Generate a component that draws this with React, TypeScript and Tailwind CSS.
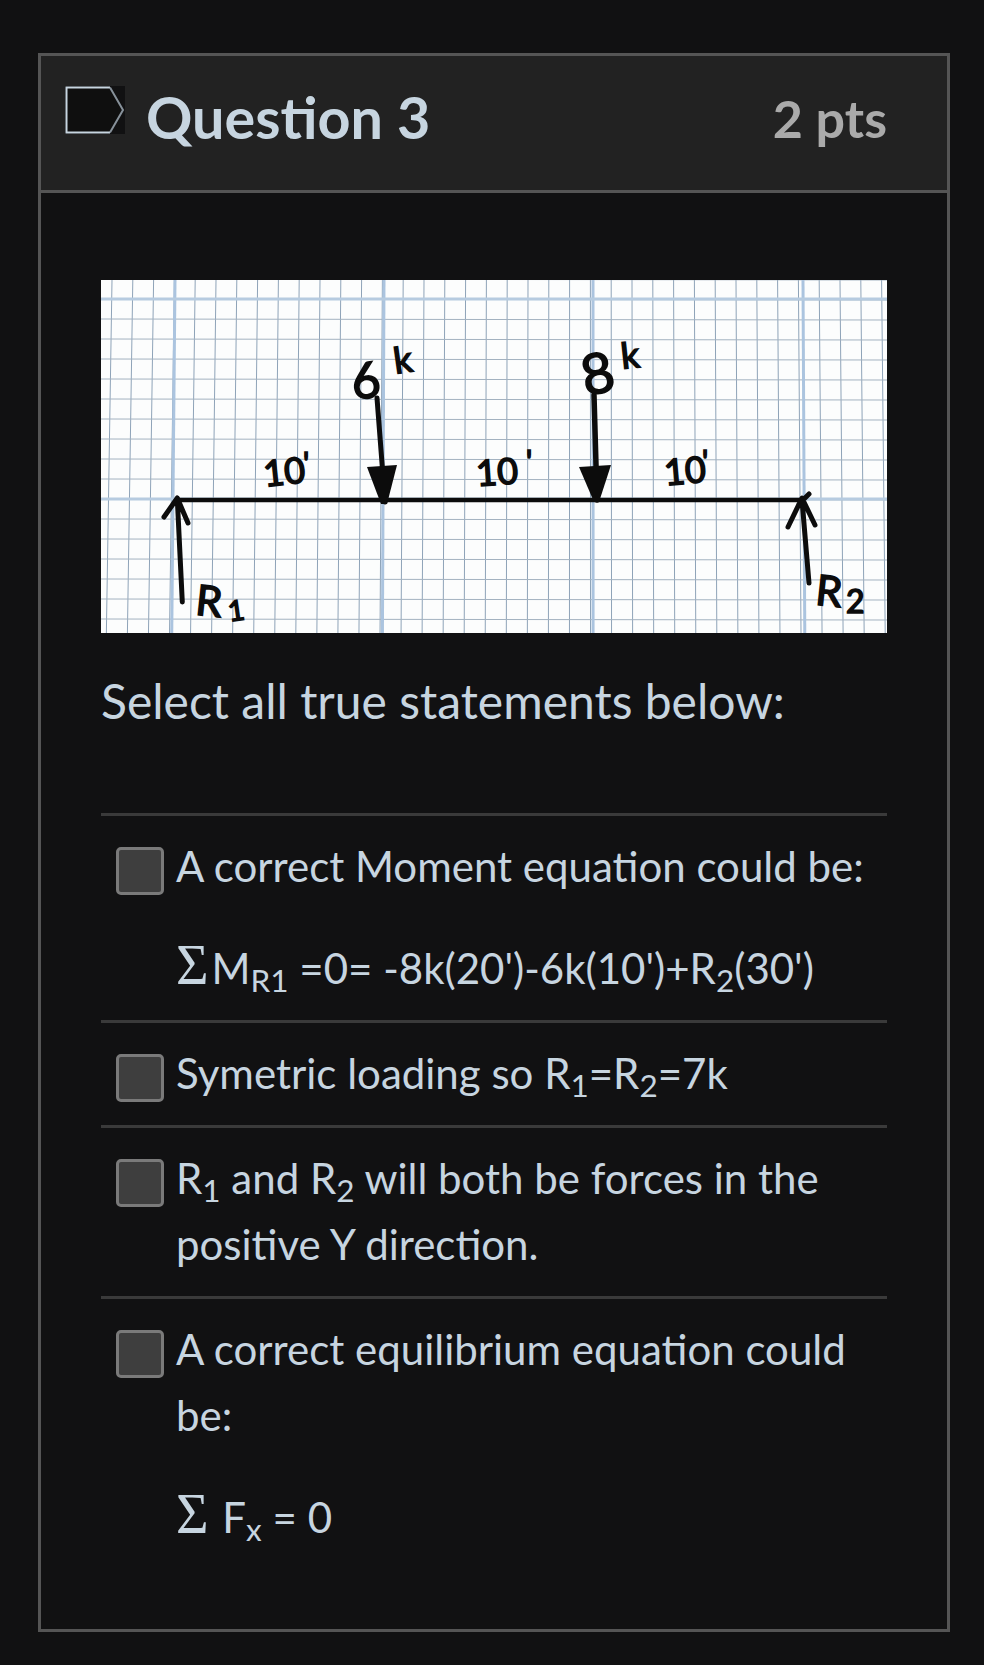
const minorV = Array.from({ length: 38 }, (_, i) => 11 + i * 20.8);
const majorV = [74, 283, 492, 702];
const minorH = Array.from({ length: 18 }, (_, i) => -1 + i * 20);
const majorH = [19, 219];

const hand = { fontFamily: "Lato, sans-serif", fill: "#0c0c0c", stroke: "#0c0c0c", strokeWidth: 1.6, fontWeight: 400 };

function BeamSketch() {
  return (
    <svg viewBox="0 0 786 353" className="block w-full h-[353px] bg-[#fcfdfd]">
      {minorV.map((x) => (
        <line key={x} x1={x} y1={0} x2={x + (x - 480) * 0.012} y2={353} stroke="#8ea3b8" strokeWidth={1} />
      ))}
      {minorH.map((y) => (
        <line key={y} x1={0} y1={y} x2={786} y2={y + 1} stroke="#a3b2c0" strokeWidth={1} />
      ))}
      {majorV.map((x) => (
        <line key={x} x1={x} y1={0} x2={x + (x - 480) * 0.008} y2={353} stroke="#abc4df" strokeWidth={3} />
      ))}
      {majorH.map((y) => (
        <line key={y} x1={0} y1={y} x2={786} y2={y} stroke="#b6cbe0" strokeWidth={3} />
      ))}
      <g fill="none" stroke="#0c0c0c" strokeLinecap="round" strokeLinejoin="round">
        <path d="M76 220 L699 220" strokeWidth={4.5} />
        <path d="M81.3 322 L76.3 219 M63 237 L76.3 218 L87 243" strokeWidth={5} />
        <path d="M276 118 L284 222" strokeWidth={5} />
        <path d="M493 115 L496 220" strokeWidth={5.5} />
        <path d="M708 303 L701 220 M687 247 L701 218 L714 245 M698 224 L708 214" strokeWidth={5} />
      </g>
      <path d="M266 187 L296 185 L286 224 L280 224 Z" fill="#0c0c0c" />
      <path d="M478 187 L510 185 L498 222 L493 222 Z" fill="#0c0c0c" />
      <g style={hand}>
        <text x={250} y={118} fontSize={50} transform="rotate(-6 265 97)">6</text>
        <text x={293} y={92} fontSize={36} transform="rotate(-8 307 82)">k</text>
        <text x={162} y={205} fontSize={36} transform="rotate(-6 180 190)">10</text>
        <text x={202} y={194} fontSize={30}>'</text>
        <text x={375} y={205} fontSize={36} transform="rotate(-4 392 190)">10</text>
        <text x={425} y={192} fontSize={30}>'</text>
        <text x={563} y={204} fontSize={36} transform="rotate(-5 580 190)">10</text>
        <text x={601} y={192} fontSize={30}>'</text>
        <text x={480} y={113} fontSize={56} transform="rotate(-12 498 92)">8</text>
        <text x={520} y={88} fontSize={36} transform="rotate(-6 530 76)">k</text>
        <text x={95} y={336} fontSize={42} transform="rotate(6 108 320)">R</text>
        <text x={127} y={341} fontSize={28} transform="rotate(-8 132 330)">1</text>
        <text x={715} y={326} fontSize={42} transform="rotate(6 728 310)">R</text>
        <text x={745} y={333} fontSize={32}>2</text>
      </g>
    </svg>
  );
}

function AnswerRow({ children }: { children: React.ReactNode }) {
  return (
    <div className="flex border-t-[3px] border-[#3a3a3a] pt-[17px] pb-[19px] pl-[15px]">
      <div className="mt-[14px] h-[48px] w-[48px] shrink-0 rounded-[5px] border-[3px] border-[#7a7a7a] bg-[#3e3e3e]" />
      <div className="ml-[12px] min-w-0">{children}</div>
    </div>
  );
}

function Sigma() {
  return <span className="mr-[3px] font-['Liberation_Serif',serif] text-[56px] leading-none">Σ</span>;
}

export default function App() {
  return (
    <div className="min-h-[1665px] bg-[#111112] pl-[38px] pr-[34px] pt-[53px] font-['Lato',sans-serif] text-[42px] leading-[66px] text-[#c7d5e0]">
      <div className="border-[3px] border-[#555555]">
        <div className="flex h-[137px] items-start justify-between border-b-[3px] border-[#555555] bg-[#222222] pl-[24px] pr-[60px]">
          <div className="flex items-start">
            <svg width="60" height="48" viewBox="0 0 60 48" className="mt-[30px] block bg-[#111112]">
              <path d="M45 1.5 H1.5 V46.5 H45 L58 24 Z" fill="#0f0f0f" />
              <path d="M45 1.5 H1.5 V46.5 H45" fill="none" stroke="#c7d5e0" strokeWidth="2" />
              <path d="M45 1.5 L58 24 L45 46.5" fill="none" stroke="#87919a" strokeWidth="2" />
            </svg>
            <h2 className="ml-[21px] mt-[27px] text-[57.5px] font-bold leading-[68px] text-[#c7d5e0]">Question 3</h2>
          </div>
          <span className="mt-[32px] text-[52px] font-bold leading-[60px] text-[#aaaaaa]">2 pts</span>
        </div>
        <div className="px-[60px] pt-[87px] pb-[60px]">
          <BeamSketch />
          <p className="mt-[32px] mb-[76px] text-[48px] leading-[72px]">Select all true statements below:</p>
          <AnswerRow>
            <p>A correct Moment equation could be:</p>
            <p className="mt-[36px]">
              <Sigma />M<sub>R1</sub> =0= -8k(20')-6k(10')+R<sub>2</sub>(30')
            </p>
          </AnswerRow>
          <AnswerRow>
            <p>
              Symetric loading so R<sub>1</sub>=R<sub>2</sub>=7k
            </p>
          </AnswerRow>
          <AnswerRow>
            <p>
              R<sub>1</sub> and R<sub>2</sub> will both be forces in the positive Y direction.
            </p>
          </AnswerRow>
          <AnswerRow>
            <p>A correct equilibrium equation could be:</p>
            <p className="mt-[36px]">
              <Sigma /> F<sub>x</sub> = 0
            </p>
          </AnswerRow>
        </div>
      </div>
    </div>
  );
}
